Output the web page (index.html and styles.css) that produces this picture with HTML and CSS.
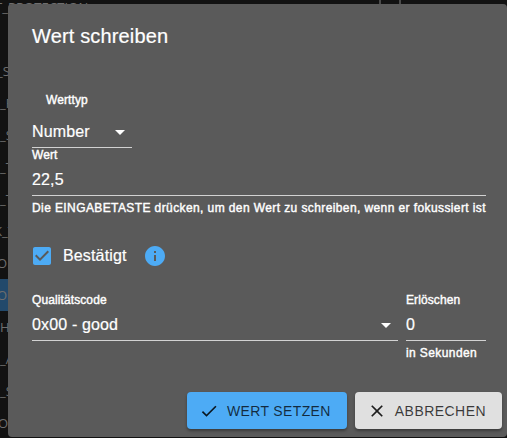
FILE: index.html
```html
<!DOCTYPE html>
<html lang="de">
<head>
    <meta charset="UTF-8">
    <meta name="viewport" content="width=device-width, initial-scale=1.0">
    <title>Wert schreiben</title>
    <link rel="stylesheet" href="styles.css">
</head>
<body>
    <div class="object-list">
        <div class="row row-first">T_PROTECTION</div>
        <div class="row"></div>
        <div class="row shift-3">_S</div>
        <div class="row">_R</div>
        <div class="row">_S</div>
        <div class="row">_T</div>
        <div class="row">_T</div>
        <div class="row shift-6">K_T</div>
        <div class="row shift-3">O</div>
        <div class="row shift-3 selected">O</div>
        <div class="row">H</div>
        <div class="row">_A</div>
        <div class="row">_S</div>
        <div class="row shift-2">O</div>
    </div>
    <div class="list-columns"></div>

    <div class="dialog">
        <h2>Wert schreiben</h2>
        <div class="content">
            <div class="field type-field">
                <label class="type-label">Werttyp</label>
                <div class="select">
                    <span>Number</span>
                    <svg class="arrow" viewBox="0 0 24 24"><path d="M7 10l5 5 5-5z"/></svg>
                </div>
            </div>
            <div class="field">
                <label class="value-label">Wert</label>
                <input type="text" value="22,5">
                <p class="helper">Die EINGABETASTE drücken, um den Wert zu schreiben, wenn er fokussiert ist</p>
            </div>
            <div class="ack">
                <svg class="checkbox" viewBox="0 0 24 24"><path d="M19 3H5c-1.11 0-2 .9-2 2v14c0 1.1.89 2 2 2h14c1.11 0 2-.9 2-2V5c0-1.1-.89-2-2-2zm-9 14l-5-5 1.41-1.41L10 14.17l7.59-7.59L19 8l-9 9z"/></svg>
                <span>Bestätigt</span>
                <svg class="info" viewBox="0 0 24 24"><path d="M12 2C6.48 2 2 6.48 2 12s4.48 10 10 10 10-4.48 10-10S17.52 2 12 2zm1 15h-2v-6h2v6zm0-8h-2V7h2v2z"/></svg>
            </div>
            <div class="bottom-fields">
                <div class="field quality-field">
                    <label>Qualitätscode</label>
                    <div class="select">
                        <span>0x00 - good</span>
                        <svg class="arrow" viewBox="0 0 24 24"><path d="M7 10l5 5 5-5z"/></svg>
                    </div>
                </div>
                <div class="field expire-field">
                    <label>Erlöschen</label>
                    <input type="text" value="0">
                    <p class="helper">in Sekunden</p>
                </div>
            </div>
        </div>
        <div class="actions">
            <button class="btn btn-primary">
                <svg viewBox="0 0 24 24"><path d="M9 16.17L4.83 12l-1.42 1.41L9 19 21 7l-1.41-1.41z"/></svg>
                <span>Wert setzen</span>
            </button>
            <button class="btn btn-grey">
                <svg viewBox="0 0 24 24"><path d="M19 6.41L17.59 5 12 10.59 6.41 5 5 6.41 10.59 12 5 17.59 6.41 19 12 13.41 17.59 19 19 17.59 13.41 12z"/></svg>
                <span>Abbrechen</span>
            </button>
        </div>
    </div>
</body>
</html>
```
FILE: styles.css
```css
* {
    box-sizing: border-box;
}

body {
    margin: 0;
    height: 438px;
    overflow: hidden;
    position: relative;
    background-color: #121212;
    color: #fff;
    font-family: "Liberation Sans", Arial, sans-serif;
    font-size: 16px;
}

/* dimmed object list behind the dialog */
.object-list {
    margin-top: -9px;
    width: 100px;
    font-family: "Open Sans", sans-serif;
    font-size: 13px;
    color: #6e6e6e;
}

.row {
    height: 32px;
    line-height: 33px;
    white-space: nowrap;
}

.row-first {
    text-indent: -5px;
    letter-spacing: 0.1px;
}

.shift-2 {
    text-indent: -2px;
}

.shift-3 {
    text-indent: -3px;
}

.shift-6 {
    text-indent: -6px;
}

.selected {
    background-color: #22496b;
}

.list-columns {
    position: absolute;
    top: 0;
    left: 379px;
    width: 22px;
    height: 4px;
    border-left: 2px solid #4a4a4a;
    border-right: 2px solid #4a4a4a;
}

.dialog {
    position: absolute;
    top: 4px;
    left: 8px;
    width: 499px;
    height: 433px;
    display: flex;
    flex-direction: column;
    background-color: #5a5a5a;
    border-radius: 4px;
}

h2 {
    margin: 0;
    padding: 16px 24px;
    font-size: 20px;
    font-weight: 400;
    line-height: 32px;
    letter-spacing: 0.15px;
    -webkit-text-stroke: 0.2px #fff;
}

.content {
    flex: 1;
    padding: 24px 21px 0 24px;
}

.field {
    display: flex;
    flex-direction: column;
}

label {
    font-size: 12px;
    line-height: 17px;
    letter-spacing: 0.1px;
    -webkit-text-stroke: 0.4px #fff;
}

.type-label {
    padding-left: 14px;
    margin-bottom: 8px;
}

.value-label {
    line-height: 15px;
    margin-bottom: 2px;
}

.select {
    display: flex;
    justify-content: space-between;
    align-items: center;
    height: 31px;
    border-bottom: 1px solid #d2d2d2;
    letter-spacing: 0.15px;
    -webkit-text-stroke: 0.2px #fff;
}

.type-field {
    width: 100px;
}

.type-field .select {
    padding-bottom: 1px;
}

.quality-field .select {
    height: 32px;
}

.arrow {
    width: 24px;
    height: 24px;
    fill: #fff;
}

input {
    width: 100%;
    height: 31px;
    padding: 0;
    border: none;
    border-bottom: 1px solid #d2d2d2;
    background: none;
    color: #fff;
    font-family: inherit;
    font-size: 16px;
    letter-spacing: 0.15px;
    outline: none;
    -webkit-text-stroke: 0.2px #fff;
}

.expire-field input {
    height: 32px;
}

.helper {
    margin: 2px 0 0;
    font-size: 12px;
    line-height: 20px;
    letter-spacing: 0.4px;
    white-space: nowrap;
    -webkit-text-stroke: 0.4px #fff;
}

.ack {
    display: flex;
    align-items: center;
    height: 24px;
    margin-top: 26px;
    letter-spacing: 0.15px;
    -webkit-text-stroke: 0.2px #fff;
}

.checkbox {
    width: 24px;
    height: 24px;
    margin: 0 9px 0 -2px;
    fill: #4dabf5;
}

.info {
    width: 24px;
    height: 24px;
    margin-left: 16px;
    fill: #4dabf5;
}

.bottom-fields {
    display: flex;
    gap: 8px;
    margin-top: 24px;
}

.quality-field {
    flex: 1;
}

.expire-field {
    width: 80px;
}

.actions {
    display: flex;
    justify-content: flex-end;
    gap: 8px;
    padding: 8px 5px 8px 8px;
}

.btn {
    display: flex;
    align-items: center;
    height: 37px;
    padding: 0 16px 0 12px;
    border: none;
    border-radius: 4px;
    box-shadow: 0 2px 3px rgba(0, 0, 0, 0.35);
    color: rgba(0, 0, 0, 0.87);
    font-family: inherit;
    font-size: 14px;
    letter-spacing: 0.45px;
    text-transform: uppercase;
}

.btn span {
    color: rgba(0, 0, 0, 0.75);
}

.btn svg {
    width: 20px;
    height: 20px;
    margin-right: 8px;
    fill: currentColor;
}

.btn-primary {
    background-color: #4dabf5;
    letter-spacing: 0.37px;
}

.btn-grey {
    background-color: #e0e0e0;
}
```
